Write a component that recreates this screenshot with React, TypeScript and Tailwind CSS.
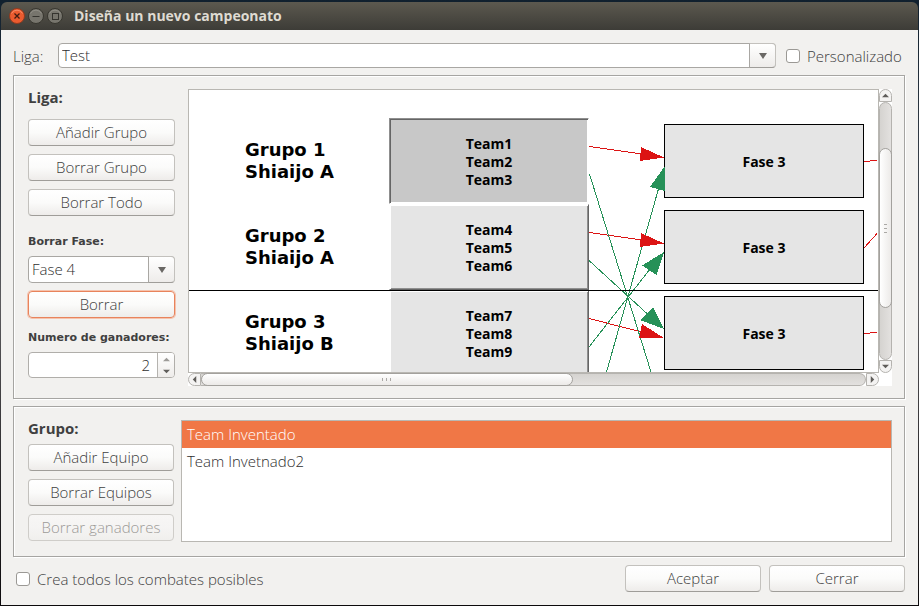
import { useId, useState } from "react";
import type { ReactNode } from "react";

const BUTTON =
  "h-[27px] rounded-[4px] border border-[#c3c1bd] border-b-[#9f9d99] bg-linear-to-b from-white via-[#fbfbfa] to-[#eeecea] text-center text-[15px] leading-[25px] text-[#404040] disabled:border-[#cfcdc9] disabled:from-[#f7f6f5] disabled:via-[#f5f4f3] disabled:to-[#f0efed] disabled:text-[#9c9a97]";

function PushButton({
  children,
  className = "",
  disabled = false,
}: {
  children: ReactNode;
  className?: string;
  disabled?: boolean;
}) {
  return (
    <button type="button" disabled={disabled} className={`${BUTTON} ${className}`}>
      {children}
    </button>
  );
}

function Triangle({ dir, faint = false }: { dir: "up" | "down" | "left" | "right"; faint?: boolean }) {
  const points = {
    up: "0,6 4,2 8,6",
    down: "0,2 8,2 4,6",
    left: "2,4 6,0 6,8",
    right: "6,4 2,0 2,8",
  }[dir];
  return (
    <svg viewBox="0 0 8 8" className="h-[7px] w-[7px]" aria-hidden="true">
      <polygon points={points} fill={faint ? "#9d9b98" : "#5f5d5a"} />
    </svg>
  );
}

function Combo({ id, options, className = "" }: { id: string; options: string[]; className?: string }) {
  return (
    <div className={`relative ${className}`}>
      <select
        id={id}
        className="block h-full w-full appearance-none rounded-[4px] border border-[#a9a7a3] bg-white pr-7 pl-[3px] text-[15px] text-[#2e2e2e]"
      >
        {options.map((o) => (
          <option key={o}>{o}</option>
        ))}
      </select>
      <span className="pointer-events-none absolute inset-y-0 right-0 flex w-[27px] items-center justify-center rounded-r-[4px] border border-[#c3c1bd] border-b-[#9f9d99] border-l-[#a9a7a3] bg-linear-to-b from-white to-[#eeecea]">
        <svg viewBox="0 0 8 6" className="h-1.5 w-2" aria-hidden="true">
          <polygon points="0,0 8,0 4,6" fill="#6a6865" />
        </svg>
      </span>
    </div>
  );
}

function Check({ label, className = "" }: { label: string; className?: string }) {
  const id = useId();
  return (
    <div className={`flex items-center gap-[7px] ${className}`}>
      <input
        id={id}
        type="checkbox"
        className="h-3.5 w-3.5 appearance-none rounded-[3px] border border-[#9b9995] bg-white checked:bg-[#f07746]"
      />
      <label htmlFor={id} className="leading-5">
        {label}
      </label>
    </div>
  );
}

function Panel({ children, className = "" }: { children: ReactNode; className?: string }) {
  return (
    <section
      className={`flex border border-[#a6a5a2] pt-[13px] pr-3 pl-[13px] shadow-[inset_1px_1px_#fff,1px_1px_#fff] ${className}`}
    >
      {children}
    </section>
  );
}

const groups = [
  { name: "Grupo 1", area: "Shiaijo A", teams: ["Team1", "Team2", "Team3"], pressed: true },
  { name: "Grupo 2", area: "Shiaijo A", teams: ["Team4", "Team5", "Team6"], pressed: false },
  { name: "Grupo 3", area: "Shiaijo B", teams: ["Team7", "Team8", "Team9"], pressed: false },
];

/* Places of the nodes on the diagram canvas. */
const groupTop = ["top-[28px]", "top-[114px]", "top-[200px]"];
const phaseTop = ["top-[34px]", "top-[120px]", "top-[206px]"];

function Diagram() {
  return (
    <div className="relative h-[284px] overflow-hidden border border-[#b9b7b2] bg-white font-bold text-black">
      {groups.map((g, i) => (
        <div key={g.name}>
          <div
            className={`absolute left-[56px] flex h-[86px] flex-col justify-center font-['DejaVu_Sans',sans-serif] text-lg leading-[22px] whitespace-nowrap ${groupTop[i]}`}
          >
            <span>{g.name}</span>
            <span>{g.area}</span>
          </div>
          <div
            className={`absolute left-[200px] flex h-[86px] w-[200px] flex-col items-center justify-center border pt-0.5 text-sm leading-[18px] ${groupTop[i]} ${
              g.pressed
                ? "border-t-[#8f8f8f] border-r-white border-b-white border-l-[#8f8f8f] bg-[#c8c8c8] shadow-[inset_1px_1px_#656565,inset_-1px_-1px_#fff]"
                : "border-t-white border-r-[#656565] border-b-[#656565] border-l-white bg-[#e5e5e5] shadow-[inset_1px_1px_#fff,inset_-1px_-1px_#8f8f8f]"
            }`}
          >
            {g.teams.map((t) => (
              <span key={t}>{t}</span>
            ))}
          </div>
          <div
            className={`absolute left-[475px] flex h-[74px] w-[200px] items-center justify-center border border-black bg-[#e5e5e5] pt-0.5 text-sm ${phaseTop[i]}`}
          >
            Fase 3
          </div>
        </div>
      ))}
      <svg
        viewBox="0 0 689 282"
        className="absolute top-0 left-0 h-[282px] w-[689px]"
        shapeRendering="crispEdges"
        aria-hidden="true"
      >
        <g stroke="#dc1414" fill="none">
          <path d="M400 56.500L470 66.500M400 142.500L470 152.500M400 228.500L470 246.500" />
          <path d="M675 71.500L688 70.500M675 158L688 143.500M675 243.500L688 242.500" />
        </g>
        <g stroke="#269158" fill="none">
          <path d="M400.500 84L462 282M400 170.500L465 230M400 257L465 174M417.500 282L470 97" />
        </g>
        <g fill="#dc1414">
          <polygon points="475,67.500 452,57 451,71" />
          <polygon points="475,153.500 452,143 451,157" />
          <polygon points="475,248 453,234 450,248" />
        </g>
        <g fill="#269158">
          <polygon points="476,76 461,97 476,101" />
          <polygon points="475,162 453,175.500 467.500,185" />
          <polygon points="475,239 464,217 451,230" />
        </g>
      </svg>
      <div className="absolute top-[200px] left-0 h-px w-full bg-black" />
    </div>
  );
}

function Grip({ vertical = false }: { vertical?: boolean }) {
  return (
    <span className={`flex gap-[3px] ${vertical ? "flex-col" : ""}`}>
      {[0, 1, 2].map((n) => (
        <i key={n} className={`block bg-[#aaa8a5] ${vertical ? "h-px w-[3px]" : "h-[3px] w-px"}`} />
      ))}
    </span>
  );
}

const ARROW = "flex h-[13px] w-[13px] shrink-0 items-center justify-center border border-[#b5b3af] bg-[#f4f3f2]";
const THUMB = "flex shrink-0 items-center justify-center rounded-full border border-[#a3a19d]";

function HorizontalBar() {
  return (
    <div className="flex h-[13px] bg-white">
      <button type="button" aria-label="Izquierda" className={`${ARROW} rounded-l-full`}>
        <Triangle dir="left" />
      </button>
      <div className="flex flex-1 rounded-r-full border-y border-r border-[#b5b3af] bg-linear-to-b from-[#d5d3d0] to-[#e3e1df]">
        <div className={`${THUMB} -my-px w-[56%] bg-linear-to-b from-white to-[#eceae8]`}>
          <Grip />
        </div>
      </div>
      <button type="button" aria-label="Derecha" className={`${ARROW} rounded-r-full`}>
        <Triangle dir="right" />
      </button>
    </div>
  );
}

function VerticalBar() {
  return (
    <div className="mb-[13px] flex w-[13px] flex-col">
      <button type="button" aria-label="Arriba" className={`${ARROW} rounded-t-full`}>
        <Triangle dir="up" />
      </button>
      <div className="flex flex-1 flex-col rounded-full border border-[#b5b3af] bg-linear-to-r from-[#d5d3d0] to-[#e3e1df] pt-[45px]">
        <div className={`${THUMB} -mx-px h-40 bg-linear-to-r from-white to-[#eceae8]`}>
          <Grip vertical />
        </div>
      </div>
      <button type="button" aria-label="Abajo" className={`${ARROW} rounded-b-full`}>
        <Triangle dir="down" />
      </button>
    </div>
  );
}

function TitleButton({ kind, label }: { kind: "close" | "min" | "max"; label: string }) {
  const close = kind === "close";
  return (
    <button type="button" aria-label={label} className="h-4 w-4">
      <svg viewBox="0 0 16 16" className="h-4 w-4" fill="none">
        <circle cx="8" cy="8" r="7.500" fill={close ? "#ea5b2f" : "#77756d"} stroke={close ? "#8f3a1f" : "#37362f"} />
        <path d="M2.500 5.500a6.200 6.200 0 0 1 11 0" stroke={close ? "#f58b66" : "#8f8d85"} />
        {close && <path d="M5.500 5.500l5 5M10.500 5.500l-5 5" stroke="#3f1c10" strokeWidth="1.300" />}
        {kind === "min" && <path d="M4.500 8.500h7" stroke="#35342f" />}
        {kind === "max" && <rect x="5.500" y="5.500" width="6" height="6" stroke="#35342f" />}
      </svg>
    </button>
  );
}

export default function App() {
  const [teams] = useState(["Team Inventado", "Team Invetnado2"]);
  const [selected, setSelected] = useState(0);
  const [winners, setWinners] = useState(2);

  return (
    <div className="min-h-screen bg-linear-to-b from-[#10202e] via-[#5c5b5e] to-[#0c0a0c] px-px pt-0.5 pb-px font-['Open_Sans','Noto_Sans',sans-serif] text-[15px] font-light text-[#404040]">
      <header className="flex h-7 items-center rounded-t-md bg-linear-to-b from-[#5c594f] to-[#3d3c37] pl-2">
        <div className="flex gap-[3px]">
          <TitleButton kind="close" label="Cerrar ventana" />
          <TitleButton kind="min" label="Minimizar" />
          <TitleButton kind="max" label="Maximizar" />
        </div>
        <h1 className="ml-[11px] text-sm font-bold text-[#dfdbd2]">Diseña un nuevo campeonato</h1>
      </header>

      <main className="bg-[#f2f1ef] px-3 py-[13px] pr-[13px]">
        <div className="flex items-center">
          <label htmlFor="league" className="w-[45px] leading-5">
            Liga:
          </label>
          <Combo id="league" options={["Test"]} className="mr-2.5 h-[25px] flex-1" />
          <Check label="Personalizado" className="w-[119px]" />
        </div>

        <Panel className="mt-[7px] gap-[13px] pb-3">
          <div className="flex w-[148px] shrink-0 flex-col pl-px">
            <h2 className="text-[15px] leading-4 font-bold">Liga:</h2>
            <div className="mt-3.5 flex flex-col gap-2">
              <PushButton>Añadir Grupo</PushButton>
              <PushButton>Borrar Grupo</PushButton>
              <PushButton>Borrar Todo</PushButton>
            </div>
            <label
              htmlFor="phase"
              className="mt-[18px] font-['DejaVu_Sans',sans-serif] text-[11px] leading-4 font-bold whitespace-nowrap"
            >
              Borrar Fase:
            </label>
            <Combo id="phase" options={["Fase 4"]} className="mt-1.5 h-[27px]" />
            <PushButton className="mt-2 border-[#e8835c] border-b-[#e8835c] shadow-[0_0_0_1px_#f5c3ae]">Borrar</PushButton>
            <label
              htmlFor="winners"
              className="mt-3 font-['DejaVu_Sans',sans-serif] text-[11px] leading-4 font-bold whitespace-nowrap"
            >
              Numero de ganadores:
            </label>
            <div className="mt-1.5 flex h-[26px] overflow-hidden rounded-[4px] border border-[#b0aeaa] bg-white">
              <input
                id="winners"
                type="number"
                value={winners}
                onChange={(e) => setWinners(Number(e.target.value))}
                className="min-w-0 flex-1 [appearance:textfield] pr-[7px] text-right text-[15px] text-[#2e2e2e] [&::-webkit-inner-spin-button]:appearance-none"
              />
              <div className="flex w-[17px] flex-col border-l border-[#b5b3af] bg-linear-to-b from-white to-[#eeecea]">
                <button
                  type="button"
                  aria-label="Más"
                  onClick={() => setWinners(winners + 1)}
                  className="flex flex-1 items-center justify-center"
                >
                  <Triangle dir="up" faint />
                </button>
                <button
                  type="button"
                  aria-label="Menos"
                  onClick={() => setWinners(winners - 1)}
                  className="flex flex-1 items-center justify-center"
                >
                  <Triangle dir="down" />
                </button>
              </div>
            </div>
          </div>

          <div className="flex min-w-0 flex-1 bg-white">
            <div className="min-w-0 flex-1">
              <Diagram />
              <HorizontalBar />
            </div>
            <VerticalBar />
          </div>
        </Panel>

        <Panel className="mt-[7px] gap-[7px] pb-3.5">
          <div className="flex w-[147px] shrink-0 flex-col gap-2 pb-px pl-px">
            <h2 className="text-[15px] leading-4 font-bold">Grupo:</h2>
            <PushButton>Añadir Equipo</PushButton>
            <PushButton>Borrar Equipos</PushButton>
            <PushButton disabled>Borrar ganadores</PushButton>
          </div>
          <ul className="flex-1 border border-[#b9b7b2] bg-white" role="listbox" aria-label="Equipos">
            {teams.map((t, i) => (
              <li
                key={t}
                role="option"
                aria-selected={i === selected}
                onClick={() => setSelected(i)}
                className={`h-[27px] px-[5px] leading-[27px] ${i === selected ? "bg-[#f07746] text-white" : "text-[#2e2e2e]"}`}
              >
                {t}
              </li>
            ))}
          </ul>
        </Panel>

        <div className="mt-2 flex items-center justify-between pl-[3px]">
          <Check label="Crea todos los combates posibles" />
          <div className="flex gap-2">
            <PushButton className="w-[136px]">Aceptar</PushButton>
            <PushButton className="w-[136px]">Cerrar</PushButton>
          </div>
        </div>
      </main>
    </div>
  );
}
